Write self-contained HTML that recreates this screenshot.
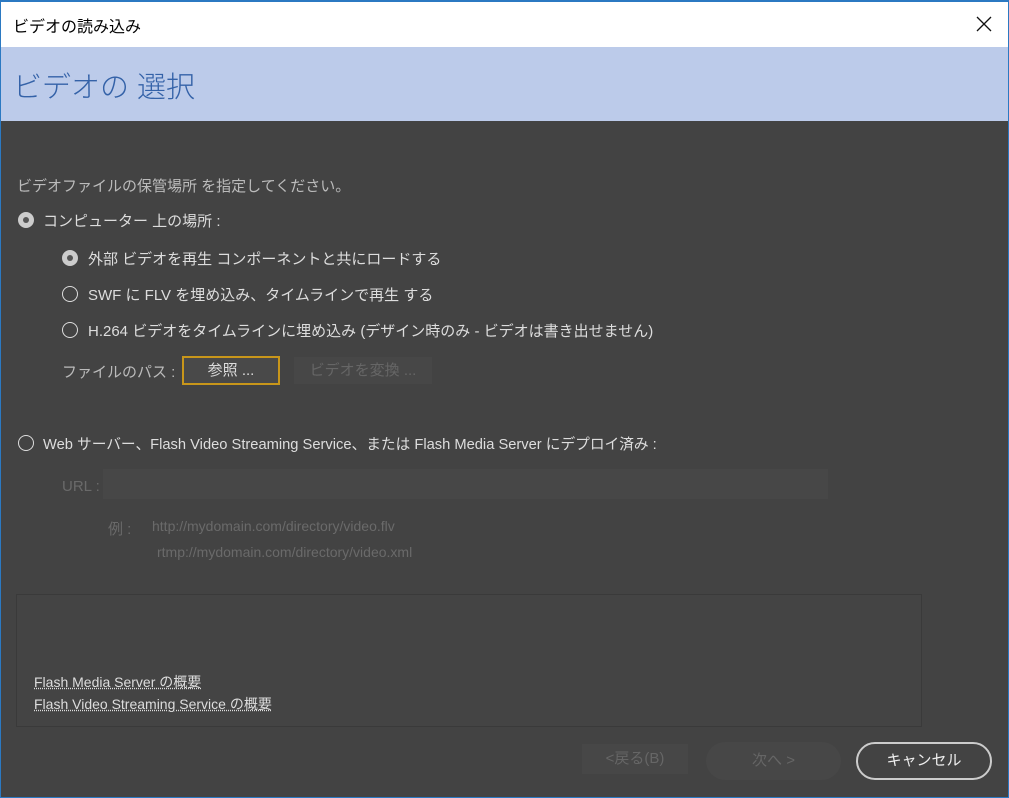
<!DOCTYPE html>
<html><head><meta charset="utf-8"><style>
*{margin:0;padding:0;box-sizing:border-box}
body{width:1009px;height:798px;overflow:hidden;background:#434343;font-family:"Liberation Sans","Noto Sans CJK JP",sans-serif;position:relative}
.frame{position:absolute;inset:0;border:1px solid #2b79c2;border-top:2px solid #2b79c2}
.tb{position:absolute;left:1px;top:2px;width:1007px;height:45px;background:#fff;color:#000;font-size:16px;padding:11px 12px}
.hd{position:absolute;left:1px;top:47px;width:1007px;height:74px;background:#bccbea;color:#3462a8;font-size:29px;font-weight:300;padding:17px 12px}
.t{position:absolute;color:#ddd;font-size:15px;white-space:nowrap}
.d{color:#6a6a6a}
.r{position:absolute;width:16px;height:16px;border-radius:50%;border:1.5px solid #ddd}
.r.on{background:#ccc;border-color:#ccc}
.r.on::after{content:"";position:absolute;left:3.5px;top:3.5px;width:6px;height:6px;border-radius:50%;background:#555}
a{color:#ddd;text-decoration:underline dotted}
</style></head><body>
<div class="tb">ビデオの読み込み</div>
<svg style="position:absolute;left:976px;top:16px" width="16" height="16"><path d="M1 1L15 15M15 1L1 15" stroke="#111" stroke-width="1.3"/></svg>
<div class="hd">ビデオの 選択</div>
<div class="t" style="left:17px;top:175px;color:#bbb">ビデオファイルの保管場所 を指定してください。</div>
<div class="r on" style="left:18px;top:212px"></div><div class="t" style="left:43px;top:210px">コンピューター 上の場所 :</div>
<div class="r on" style="left:62px;top:250px"></div><div class="t" style="left:88px;top:248px">外部 ビデオを再生 コンポーネントと共にロードする</div>
<div class="r" style="left:62px;top:286px"></div><div class="t" style="left:88px;top:284px">SWF に FLV を埋め込み、タイムラインで再生 する</div>
<div class="r" style="left:62px;top:322px"></div><div class="t" style="left:88px;top:320px">H.264 ビデオをタイムラインに埋め込み (デザイン時のみ - ビデオは書き出せません)</div>
<div class="t" style="left:62px;top:361px;color:#bbb">ファイルのパス :</div>
<div style="position:absolute;left:182px;top:356px;width:98px;height:29px;border:2px solid #c8961a;background:#494949;color:#ddd;font-size:15px;text-align:center;line-height:25px">参照 ...</div>
<div style="position:absolute;left:294px;top:357px;width:138px;height:27px;background:#474747;color:#666;font-size:15px;text-align:center;line-height:27px">ビデオを変換 ...</div>
<div class="r" style="left:18px;top:435px"></div><div class="t" style="left:43px;top:433px;font-size:14.7px">Web サーバー、Flash Video Streaming Service、または Flash Media Server にデプロイ済み :</div>
<div class="t d" style="left:62px;top:478px">URL :</div>
<div style="position:absolute;left:103px;top:469px;width:725px;height:30px;background:#474747"></div>
<div class="t d" style="left:108px;top:518px">例 :</div>
<div class="t d" style="left:152px;top:518px;font-size:14px">http://mydomain.com/directory/video.flv</div>
<div class="t d" style="left:157px;top:544px;font-size:14px">rtmp://mydomain.com/directory/video.xml</div>
<div style="position:absolute;left:16px;top:594px;width:906px;height:133px;border:1px solid #3a3a3a;background:#444"></div>
<div class="t" style="left:34px;top:672px;font-size:14px"><a>Flash Media Server の概要</a></div>
<div class="t" style="left:34px;top:694px;font-size:14px"><a>Flash Video Streaming Service の概要</a></div>
<div style="position:absolute;left:582px;top:744px;width:106px;height:30px;background:#474747;color:#666;font-size:15px;text-align:center;line-height:30px">&lt;戻る(B)</div>
<div style="position:absolute;left:706px;top:742px;width:135px;height:38px;border-radius:19px;background:#474747;color:#666;font-size:15px;text-align:center;line-height:38px">次へ &gt;</div>
<div style="position:absolute;left:856px;top:742px;width:136px;height:38px;border-radius:19px;border:2px solid #ccc;color:#eee;font-size:15px;text-align:center;line-height:34px">キャンセル</div>
<div class="frame"></div>
</body></html>
